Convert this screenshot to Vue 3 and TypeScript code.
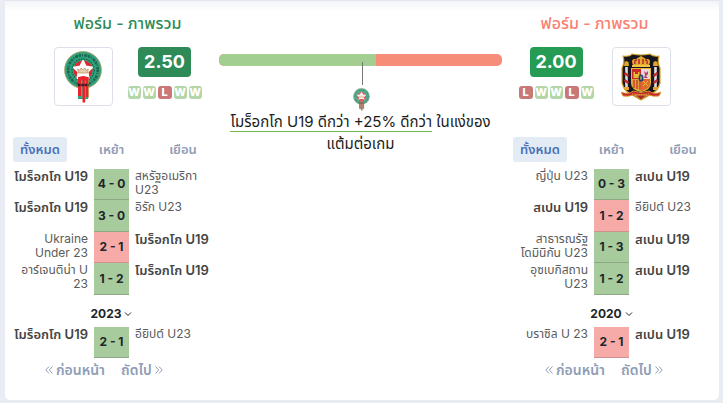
<script setup lang="ts">
import { ref } from 'vue'

type Result = 'W' | 'L'
interface Match { home: string; away: string; score: string; own: 'home' | 'away'; result: Result }
interface Team {
  side: 'left' | 'right'
  crest: 'morocco' | 'spain'
  name: string
  points: string
  form: Result[]
  recent: Match[]
  year: string
  older: Match[]
}

const tabs = ['ทั้งหมด', 'เหย้า', 'เยือน']
const active = ref<Record<string, number>>({ left: 0, right: 0 })
const share = 55.5

const teams: Team[] = [
  {
    side: 'left', crest: 'morocco', name: 'โมร็อกโก U19', points: '2.50', form: ['W', 'W', 'L', 'W', 'W'],
    recent: [
      { home: 'โมร็อกโก U19', away: 'สหรัฐอเมริกา U23', score: '4 - 0', own: 'home', result: 'W' },
      { home: 'โมร็อกโก U19', away: 'อิรัก U23', score: '3 - 0', own: 'home', result: 'W' },
      { home: 'Ukraine Under 23', away: 'โมร็อกโก U19', score: '2 - 1', own: 'away', result: 'L' },
      { home: 'อาร์เจนติน่า U 23', away: 'โมร็อกโก U19', score: '1 - 2', own: 'away', result: 'W' },
    ],
    year: '2023',
    older: [{ home: 'โมร็อกโก U19', away: 'อียิปต์ U23', score: '2 - 1', own: 'home', result: 'W' }],
  },
  {
    side: 'right', crest: 'spain', name: 'สเปน U19', points: '2.00', form: ['L', 'W', 'W', 'L', 'W'],
    recent: [
      { home: 'ญี่ปุ่น U23', away: 'สเปน U19', score: '0 - 3', own: 'away', result: 'W' },
      { home: 'สเปน U19', away: 'อียิปต์ U23', score: '1 - 2', own: 'home', result: 'L' },
      { home: 'สาธารณรัฐโดมินิกัน U23', away: 'สเปน U19', score: '1 - 3', own: 'away', result: 'W' },
      { home: 'อุซเบกิสถาน U23', away: 'สเปน U19', score: '1 - 2', own: 'away', result: 'W' },
    ],
    year: '2020',
    older: [{ home: 'บราซิล U 23', away: 'สเปน U19', score: '2 - 1', own: 'away', result: 'L' }],
  },
]
</script>

<template>
  <svg class="defs" aria-hidden="true">
    <symbol id="morocco" viewBox="0 0 38 52">
      <circle cx="19" cy="19" r="18.4" fill="#2fa37c" stroke="#b39a63" stroke-width=".8" />
      <circle cx="19" cy="19" r="14.8" fill="none" stroke="#1d6650" stroke-width="2.600" stroke-dasharray="2.2 1 1 1.3 3 .8" />
      <circle cx="19" cy="19" r="11" fill="none" stroke="#1d6650" stroke-width="1.400" stroke-dasharray="1.6 1" />
      <circle cx="19" cy="19" r="9.6" fill="#e2262e" />
      <path d="M19 10l2.800 5.600 6.200.9-4.500 4.400 1 6.100-5.500-2.900-5.500 2.900 1-6.100L10 16.500l6.200-.9z" fill="#fff" stroke="#fff" stroke-width="2" />
      <path d="M14.5 22l-.8-4 2.3 1.4 1-2.3 2 1.5 2-1.5 1 2.3 2.3-1.4-.8 4z" fill="#e7cfae" stroke="#b58a5c" stroke-width=".7" />
      <path d="M14 26h10v22H14z" fill="#2fa37c" />
      <path d="M14 26h3v19h-3zM22 26h2.500v20H22z" fill="#e9242c" />
      <path d="M18.500 27h2.700v24.500h-2.700z" fill="#e9242c" />
      <path d="M17.700 27v20M21.500 27v20M24.500 28v19" stroke="#b69458" stroke-width=".7" />
      <path d="M14 26.500q5-3 10.500 0v3H14z" fill="#e9242c" />
      <path d="M14 34h10.500" stroke="#341b1d" stroke-width="2.600" stroke-dasharray="2.500 .8" />
    </symbol>
    <symbol id="spain" viewBox="0 0 40 48">
      <path d="M2 3q7 1 9-2 9 2 18 0 3 3 9 2-2 6 1 12v15q-2 9-12 13l-7 4-7-4Q3 39 1 30V15Q4 9 2 3z" fill="#17151d" stroke="#d5a02c" stroke-width="1.200" />
      <path d="M12 12q-3-7 3-6l5-3 5 3q6-1 3 6z" fill="#e2aa2e" />
      <path d="M14 11q-1-4 2-4M18 11V6m4 5V6m4 5q1-4-2-4" fill="none" stroke="#b62a28" stroke-width="1.500" />
      <path d="M11 13h18" stroke="#f0c445" stroke-width="2" />
      <path d="M10 15h20v15q0 7-10 9-10-2-10-9z" fill="#e3b33b" />
      <path d="M11 16h9v10h-9z" fill="#cb2a2c" />
      <path d="M12.500 25v-6h1.500v2h3v-2h1.500v6z" fill="#e9b936" />
      <path d="M20 16h9v10h-9z" fill="#e9d8d7" />
      <path d="M23 18l2 2 2-2v3l-2 2 2 2h-4l1-3z" fill="#b44271" />
      <path d="M11 26h9v12q-9-2-9-8z" fill="#e0a238" />
      <path d="M13 27v8m3-8v9m3-9v10" stroke="#cc3830" stroke-width="1.300" />
      <path d="M20 26h9v4q0 6-9 8z" fill="#dd6a2e" />
      <path d="M22 28l5 5m0-5l-5 5" stroke="#edbf3b" />
      <ellipse cx="20" cy="25" rx="2.500" ry="3.500" fill="#1e4274" />
      <path d="M20 23v4m-1-2h2" stroke="#e8c24b" stroke-width=".8" />
      <path d="M5.500 14v21M34.500 14v21" stroke="#dfe1e6" stroke-width="2.600" />
      <path d="M3.500 20l4 3m-4 4l4 3M36.500 20l-4 3m4 4l-4 3" stroke="#c5282b" stroke-width="2.200" />
      <path d="M3 13h5l-.5-4-2-1-2 1zM32 13h5l-.5-4-2-1-2 1zM3 34h5v3H3zM32 34h5v3h-5z" fill="#dfa52e" />
      <path d="M0 39q8 3 12-1 8 3 16 0 5 4 12 1l-2 4q-6 1-10-1-8 3-16 0-5 2-10 1z" fill="#c8262b" stroke="#dba334" stroke-width=".9" />
      <path d="M14 42h12l-6 5z" fill="#a62a25" stroke="#d8a235" />
      <path d="M11 40.500q9 2 18 0" fill="none" stroke="#e4b64a" stroke-width=".8" stroke-dasharray="1 .8" />
    </symbol>
  </svg>

  <main class="card">
    <section v-for="team in teams" :key="team.side" class="team" :class="team.side">
      <header class="head">
        <h2>ฟอร์ม - ภาพรวม</h2>
        <div class="summary">
          <a href="#" class="crest" :aria-label="team.name"><svg><use :href="'#' + team.crest" /></svg></a>
          <div class="stats">
            <strong class="points">{{ team.points }}</strong>
            <div class="form">
              <span v-for="(r, i) in team.form" :key="i" :class="r">{{ r }}</span>
            </div>
          </div>
        </div>
      </header>

      <nav class="tabs">
        <button v-for="(tab, i) in tabs" :key="tab" type="button" :class="{ on: active[team.side] === i }" @click="active[team.side] = i">{{ tab }}</button>
      </nav>

      <table>
        <tbody>
          <tr v-for="(m, i) in team.recent" :key="i">
            <td class="home" :class="{ own: m.own === 'home' }">{{ m.home }}</td>
            <td class="score" :class="m.result">{{ m.score }}</td>
            <td class="away" :class="{ own: m.own === 'away' }">{{ m.away }}</td>
          </tr>
        </tbody>
      </table>
      <button type="button" class="year">
        {{ team.year }}
        <svg viewBox="0 0 8 6"><path d="M1 1.500l3 3 3-3" /></svg>
      </button>
      <table>
        <tbody>
          <tr v-for="(m, i) in team.older" :key="i">
            <td class="home" :class="{ own: m.own === 'home' }">{{ m.home }}</td>
            <td class="score" :class="m.result">{{ m.score }}</td>
            <td class="away" :class="{ own: m.own === 'away' }">{{ m.away }}</td>
          </tr>
        </tbody>
      </table>
      <div class="pager">
        <button type="button"><svg viewBox="0 0 8 8"><path d="M4 .5L.8 4 4 7.500M7.500 .5L4.300 4l3.200 3.500" /></svg>ก่อนหน้า</button>
        <button type="button">ถัดไป<svg viewBox="0 0 8 8"><path d="M.5 .5L3.700 4 .5 7.500M4 .5L7.200 4 4 7.500" /></svg></button>
      </div>
    </section>

    <section class="compare">
      <div class="bar"><div class="fill" :style="{ width: share + '%' }"></div></div>
      <div class="pointer"></div>
      <svg class="mini"><use href="#morocco" /></svg>
      <p><span class="lead">โมร็อกโก U19 ดีกว่า +25% ดีกว่า</span> <span>ในแง่ของ</span><wbr><span>แต้มต่อเกม</span></p>
    </section>
  </main>
</template>

<style>
body {
  background: #e9edf3;
}
</style>

<style scoped>
.defs {
  position: absolute;
  width: 0;
  height: 0;
}
.card {
  display: grid;
  grid-template-columns: 203px minmax(0, 1fr) 203px;
  margin: 0 4px 3px 5px;
  padding: 0 6px 20px 5px;
  border-top: 1px solid #e3e6ee;
  border-radius: 0 0 5px 5px;
  background: linear-gradient(#f3f4f7, #fff 10px);
  color: #212529;
  font-family: Inter, "Noto Sans", "Noto Sans Thai", Loma, sans-serif;
  font-size: 12px;
}
button {
  padding: 0;
  border: 0;
  background: none;
  color: #8f9db5;
  font: inherit;
  cursor: pointer;
}
.left {
  order: 1;
}
.compare {
  order: 2;
}
.right {
  order: 3;
}
.head {
  display: flex;
  flex-direction: column;
  align-items: center;
}
.left .head {
  padding-left: 32px;
}
.right .head {
  padding-right: 34px;
}
h2 {
  margin: 12px 0 14px;
  color: #2e8b57;
  font-size: 16px;
  font-weight: 500;
  line-height: 20px;
}
.right h2 {
  color: #fa8072;
}
.summary {
  display: flex;
  gap: 15px;
}
.right .summary {
  flex-direction: row-reverse;
  gap: 18px;
}
.crest {
  box-sizing: border-box;
  display: grid;
  place-items: center;
  width: 59px;
  height: 59px;
  border: 1px solid #dedfe8;
  border-radius: 4px;
}
.crest svg {
  width: 40px;
  height: 52px;
}
.stats {
  display: flex;
  flex-direction: column;
  align-items: center;
  gap: 9px;
}
.points {
  width: 53px;
  border-radius: 4px;
  background: #2e8b57;
  color: #fff;
  font-size: 18px;
  font-weight: 700;
  line-height: 30px;
  text-align: center;
}
.right .points {
  background: #259b54;
}
.form {
  display: flex;
  gap: 2px;
}
.form span {
  width: 13px;
  border-radius: 3px;
  color: #fff;
  font-size: 11px;
  font-weight: 800;
  line-height: 13px;
  text-align: center;
}
.form .W {
  background: #b4d6a8;
}
.form .L {
  width: 14px;
  background: #c97777;
}
.tabs {
  display: grid;
  grid-template-columns: 54px 54px 54px;
  justify-content: space-between;
  margin: 31px 3px 7px;
}
.tabs button {
  border-radius: 3px;
  font-size: 13px;
  font-weight: 600;
  line-height: 25px;
}
.tabs .on {
  background: #e3ebf5;
  color: #4a72b8;
}
table {
  width: 100%;
  table-layout: fixed;
  border-spacing: 0;
}
tr {
  height: 31px;
}
tr:nth-child(even) {
  height: 32px;
}
td {
  padding: 0;
  color: #5b5b5b;
  line-height: 14px;
  vertical-align: top;
}
.home {
  padding-right: 6px;
  text-align: right;
}
.away {
  padding-left: 6px;
}
.own {
  color: #444;
  font-size: 13px;
  font-weight: 600;
  white-space: nowrap;
}
.score {
  width: 35px;
  border-bottom: 1px solid #8ea886;
  background: #a7cb9d;
  color: #212529;
  font-weight: 700;
  text-align: center;
  vertical-align: middle;
}
.score.L {
  border-color: #cf918f;
  background: #f6aba9;
}
.year {
  display: flex;
  align-items: center;
  gap: 3px;
  margin: 9px auto 3px;
  color: #212529;
  font-weight: 700;
  line-height: 20px;
}
.year svg {
  width: 8px;
  height: 6px;
}
svg path {
  stroke-linejoin: round;
}
.year path,
.pager path {
  fill: none;
  stroke: currentColor;
}
.pager {
  display: flex;
  gap: 16px;
  margin: 2px 0 0 35px;
}
.pager button {
  display: flex;
  align-items: center;
  gap: 3px;
  font-size: 14px;
  font-weight: 600;
  line-height: 20px;
}
.pager svg {
  width: 8px;
  height: 8px;
}
.compare {
  display: flex;
  flex-direction: column;
  align-items: center;
  padding: 53px 8px 0 6px;
}
.bar {
  width: 100%;
  height: 12px;
  border-radius: 5px;
  background: #f58d79;
  overflow: hidden;
}
.fill {
  height: 100%;
  background: #a3ce91;
}
.pointer {
  width: 1px;
  height: 23px;
  margin: -4px 0 0 3px;
  background: #777;
}
.mini {
  width: 17px;
  height: 23px;
  margin: 3px 0 0 2px;
  opacity: .8;
}
p {
  margin: 0;
  color: #1c1c1c;
  font-size: 15px;
  line-height: 22px;
  text-align: center;
}
.lead {
  border-bottom: 1px solid #75b54c;
}
</style>
